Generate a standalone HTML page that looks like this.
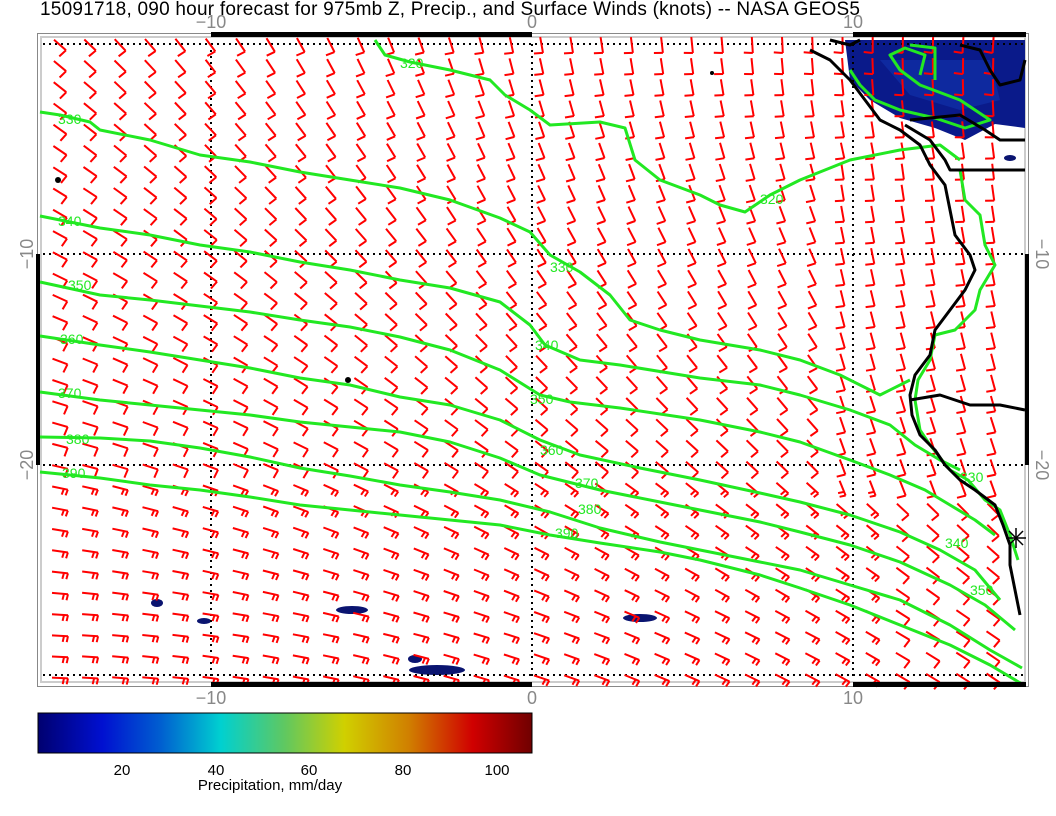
<!DOCTYPE html>
<html><head><meta charset="utf-8"><style>
html,body{margin:0;padding:0;background:#fff;width:1056px;height:816px;overflow:hidden}
svg{display:block}
text{font-family:"Liberation Sans",sans-serif}
</style></head><body>
<svg id="s" width="1056" height="816" xmlns="http://www.w3.org/2000/svg">
<defs>
<linearGradient id="cb" x1="0" x2="1" y1="0" y2="0">
<stop offset="0" stop-color="#000070"/>
<stop offset="0.13" stop-color="#0010d0"/>
<stop offset="0.25" stop-color="#0060d0"/>
<stop offset="0.37" stop-color="#00d0d0"/>
<stop offset="0.5" stop-color="#60c860"/>
<stop offset="0.62" stop-color="#d0d000"/>
<stop offset="0.75" stop-color="#d08000"/>
<stop offset="0.88" stop-color="#d00000"/>
<stop offset="1" stop-color="#700000"/>
</linearGradient>
</defs>
<text x="40" y="15" font-size="19" fill="#000" textLength="820">15091718, 090 hour forecast for 975mb Z, Precip., and Surface Winds (knots) -- NASA GEOS5</text>
<rect x="37.5" y="33.5" width="991" height="653" fill="none" stroke="#888" stroke-width="1"/>
<rect x="41" y="37" width="984" height="645" fill="none" stroke="#ccc" stroke-width="2"/>
<path d="M845,40 L1025,40 L1025,128 L995,124 L965,140 L935,128 L900,118 L870,100 L850,80 Z" fill="#0a1a8a"/>
<path d="M880,60 L990,60 L1000,100 L960,110 L910,95 Z" fill="#1030a8" opacity="0.7"/>
<ellipse cx="352" cy="610" rx="16" ry="4" fill="#0a1470"/>
<ellipse cx="640" cy="618" rx="17" ry="4" fill="#0a1470"/>
<ellipse cx="437" cy="670" rx="28" ry="5" fill="#0a1470"/>
<ellipse cx="415" cy="659" rx="7" ry="4" fill="#0a1470"/>
<ellipse cx="157" cy="603" rx="6" ry="4" fill="#0a1470"/>
<ellipse cx="204" cy="621" rx="7" ry="3" fill="#0a1470"/>
<ellipse cx="1010" cy="158" rx="6" ry="3" fill="#0a1470"/>
<g stroke="#000" stroke-width="2" stroke-dasharray="2,4" fill="none">
<line x1="43" y1="44" x2="1025" y2="44"/>
<line x1="43" y1="254" x2="1025" y2="254"/>
<line x1="43" y1="465" x2="1025" y2="465"/>
<line x1="43" y1="675" x2="1025" y2="675"/>
<line x1="211" y1="44" x2="211" y2="680"/>
<line x1="532" y1="44" x2="532" y2="680"/>
<line x1="853" y1="44" x2="853" y2="680"/>
</g>
<g id="barbs" stroke="#f00" stroke-width="2" fill="none"></g>
<g stroke="#22e822" stroke-width="3" fill="none" stroke-linejoin="round">
<polyline points="375,40 385,55 410,62 450,70 490,80 505,95 530,110 550,125 600,122 625,128 635,160 660,180 700,195 720,205 745,212 770,195 800,180 850,160 900,150 940,145 960,160"/>
<polyline points="40,112 60,115 90,122 100,130 150,140 200,155 250,162 300,172 350,180 400,188 450,200 500,218 530,232 550,255 580,272 610,295 630,320 660,330 700,340 760,350 800,360 840,375 880,395 910,380"/>
<polyline points="40,216 100,228 150,235 200,245 250,252 300,262 350,270 400,280 450,288 500,302 530,325 545,345 580,360 620,365 700,378 760,385 800,395 850,410 890,425 915,445 940,460 960,470"/>
<polyline points="40,282 100,295 150,300 200,306 250,312 300,320 350,327 400,337 450,350 500,370 540,395 570,402 620,408 700,420 760,432 800,442 850,460 890,475 925,490 950,505 975,520 995,535"/>
<polyline points="40,336 100,345 150,352 200,360 250,368 300,378 350,385 400,397 450,405 500,420 540,440 580,455 640,468 700,480 760,493 800,502 850,515 900,532 940,550 975,570 1000,600"/>
<polyline points="40,392 100,400 150,405 200,410 250,415 300,422 350,427 400,432 450,442 500,458 540,475 600,490 660,502 700,510 760,522 800,532 850,545 900,562 950,585 985,605 1015,630"/>
<polyline points="40,437 100,438 150,441 200,448 250,457 300,468 350,476 400,485 450,492 500,500 550,512 600,528 660,542 700,550 760,562 800,570 850,585 900,600 950,625 990,650 1022,668"/>
<polyline points="40,472 100,478 150,485 200,490 250,497 300,505 350,510 400,515 450,520 500,525 550,535 600,543 660,552 700,560 760,575 800,588 850,605 900,625 950,645 990,665 1022,684"/>
<path d="M850,70 L860,85 L875,100 L900,110 L935,118 L965,128 L990,120 L960,100 L920,85 L900,70 L890,55 L905,48 L925,55 L920,75" />
<path d="M910,45 L935,48 L935,80" />
<path d="M960,170 L965,200 L980,215 L985,245 L995,265 L980,290 L975,310 L955,330 L935,335 L930,360 L918,380 L915,400 L920,430 L930,445 L950,470 L968,480 L985,500 L1000,510 L1010,535 L1018,560"/>
</g>
<g font-size="14" fill="#22e822">
<text x="400" y="68">320</text><text x="58" y="124">330</text><text x="58" y="226">340</text>
<text x="68" y="290">350</text><text x="60" y="344">360</text><text x="58" y="398">370</text>
<text x="66" y="444">380</text><text x="62" y="478">390</text>
<text x="550" y="272">330</text><text x="535" y="350">340</text><text x="530" y="404">350</text>
<text x="540" y="455">360</text><text x="575" y="488">370</text><text x="578" y="514">380</text>
<text x="555" y="538">390</text><text x="760" y="204">320</text><text x="960" y="482">330</text>
<text x="945" y="548">340</text><text x="970" y="595">350</text>
</g>
<g stroke="#000" stroke-width="3" fill="none" stroke-linejoin="round">
<path d="M810,50 L830,60 L850,80 L865,100 L880,120 L900,130 L920,145 L930,165 L945,185 L950,210 L955,235 L970,255 L975,270 L965,290 L950,310 L935,330 L930,355 L915,375 L910,395 L912,415 L920,435 L935,450 L945,465 L960,480 L975,490 L995,505 L1003,525 L1010,545 L1010,565 L1015,590 L1020,615"/>
<path d="M905,125 L930,140 L945,160 L950,170 L1025,170"/>
<path d="M910,400 L940,395 L970,405 L1000,405 L1025,410"/>
<path d="M830,40 L850,45 L860,40"/>
<path d="M960,45 L980,50 L990,70 L1000,85 L1020,80 L1025,60"/>
<path d="M910,120 L960,115 L985,130 L1000,140 L1025,140"/>
</g>
<circle cx="58" cy="180" r="3" fill="#000"/><circle cx="348" cy="380" r="3" fill="#000"/><circle cx="712" cy="73" r="2" fill="#000"/>
<g stroke="#000" stroke-width="1.5"><line x1="1006" y1="538" x2="1026" y2="538"/><line x1="1016" y1="528" x2="1016" y2="548"/><line x1="1009" y1="531" x2="1023" y2="545"/><line x1="1009" y1="545" x2="1023" y2="531"/></g>
<g fill="#000">
<rect x="211" y="32" width="321" height="5"/><rect x="853" y="32" width="173" height="5"/>
<rect x="211" y="682" width="321" height="5"/><rect x="853" y="682" width="173" height="5"/>
<rect x="36" y="254" width="4" height="211"/><rect x="1025" y="254" width="4" height="211"/>
</g>
<g font-size="18" fill="#888" text-anchor="middle">
<text x="211" y="28">−10</text><text x="532" y="28">0</text><text x="853" y="28">10</text>
<text x="211" y="704">−10</text><text x="532" y="704">0</text><text x="853" y="704">10</text>
<text transform="translate(33,254) rotate(-90)">−10</text>
<text transform="translate(33,465) rotate(-90)">−20</text>
<text transform="translate(1036,254) rotate(90)">−10</text>
<text transform="translate(1036,465) rotate(90)">−20</text>
</g>
<rect x="38" y="713" width="494" height="40" fill="url(#cb)" stroke="#000" stroke-width="1"/>
<g font-size="15" fill="#000" text-anchor="middle">
<text x="122" y="775">20</text><text x="216" y="775">40</text><text x="309" y="775">60</text><text x="403" y="775">80</text><text x="497" y="775">100</text>
<text x="270" y="790">Precipitation, mm/day</text>
</g>
</svg>
<script>
(function(){
var g=document.getElementById('barbs'),out='';
function lerp(a,b,t){return a+(b-a)*t}
for(var r=0;r<31;r++){
 var y=45+r*21.1;
 for(var c=0;c<33;c++){
  var x=60+c*30.1;
  if(x>1022)continue;
  var tx=(x-40)/985, ty=(y-40)/645;
  var top=tx<0.5?lerp(40,80,tx*2):lerp(80,95,(tx-0.5)*2);
  var bot=lerp(2,35,tx);
  var ang=lerp(top,bot,Math.min(1,ty*1.1));
  if(tx>0.8&&ty>0.2&&ty<0.7){ang=lerp(ang,85,0.6);}
  var a=ang*Math.PI/180,ux=Math.cos(a),uy=Math.sin(a),L=16;
  var x0=x-ux*L/2,y0=y-uy*L/2,x1=x+ux*L/2,y1=y+uy*L/2;
  var px=-uy,py=ux;
  out+='<line x1="'+x0.toFixed(1)+'" y1="'+y0.toFixed(1)+'" x2="'+x1.toFixed(1)+'" y2="'+y1.toFixed(1)+'"/>';
  var n=(y>470&&tx<0.85)?2:1;
  for(var k=0;k<n;k++){
   var bx=x1-ux*k*4,by=y1-uy*k*4,tl=n==2?6:9;
   out+='<line x1="'+bx.toFixed(1)+'" y1="'+by.toFixed(1)+'" x2="'+(bx+px*tl-ux*1).toFixed(1)+'" y2="'+(by+py*tl-uy*1).toFixed(1)+'"/>';
  }
 }
}
g.innerHTML=out;
})();
</script>
</body></html>
